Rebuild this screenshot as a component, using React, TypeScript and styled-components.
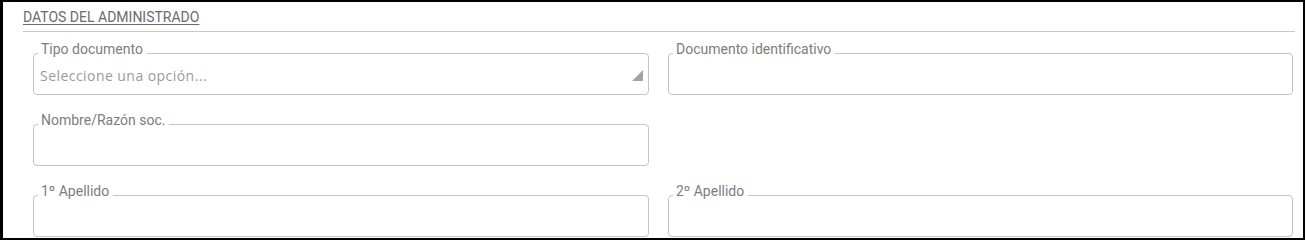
import styled, { createGlobalStyle } from "styled-components";

const GlobalStyle = createGlobalStyle`
  html, body {
    margin: 0;
    padding: 0;
    background: #ffffff;
  }
`

const fields = [
  { label: "Tipo documento", placeholder: "Seleccione una opción...", select: true },
  { label: "Documento identificativo" },
  { label: "Nombre/Razón soc." },
  null,
  { label: "1º Apellido" },
  { label: "2º Apellido" },
]

const App = () => {
  return (
    <>
      <GlobalStyle />
      <Frame>
        <Heading>DATOS DEL ADMINISTRADO</Heading>
        <Divider />
        <Grid>
          {fields.map((f, i) =>
            f ? (
              <Field key={i}>
                <Legend>{f.label}</Legend>
                <Value>
                  <Placeholder>{f.placeholder ?? ""}</Placeholder>
                  {f.select && (
                    <Caret width="11" height="11" viewBox="0 0 11 11">
                      <polygon points="11,0 11,11 0,11" fill="#a3a3a3" />
                    </Caret>
                  )}
                </Value>
              </Field>
            ) : (
              <Empty key={i} />
            )
          )}
        </Grid>
      </Frame>
    </>
  )
}

export default App;

const Frame = styled.div`
  box-sizing: border-box;
  width: 1305px;
  height: 240px;
  border: 2px solid #000;
  border-left-width: 3px;
  padding: 8px 8px 0 20px;
  overflow: hidden;
`
const Heading = styled.div`
  font-family: Roboto, "Liberation Sans", sans-serif;
  font-size: 14px;
  line-height: 15px;
  color: #6b6b6b;
  text-decoration: underline;
  text-underline-offset: 2px;
`
const Divider = styled.div`
  margin-top: 6px;
  height: 1px;
  background: #c9c9c9;
`
const Grid = styled.div`
  margin: 9px 0 0 10px;
  display: grid;
  grid-template-columns: 616px 625px;
  column-gap: 19px;
  row-gap: 17px;
`
const Empty = styled.div``
const Field = styled.fieldset`
  margin: 0;
  min-width: 0;
  padding: 0 5px 0 4px;
  border: 1px solid #c4c4c4;
  border-radius: 4px;
`
const Legend = styled.legend`
  padding: 0 4px 9px 3px;
  font-family: Roboto, "Liberation Sans", sans-serif;
  font-size: 14px;
  line-height: 16px;
  color: #7d7d7d;
`
const Value = styled.div`
  height: 28px;
  display: flex;
  align-items: flex-start;
  justify-content: space-between;
  padding-left: 2px;
`
const Placeholder = styled.span`
  font-family: "Open Sans", "DejaVu Sans", sans-serif;
  font-size: 14px;
  line-height: 16px;
  letter-spacing: 0.45px;
  color: #9a9a9a;
  padding-top: 2px;
`
const Caret = styled.svg`
  display: block;
  margin-top: 4px;
`
